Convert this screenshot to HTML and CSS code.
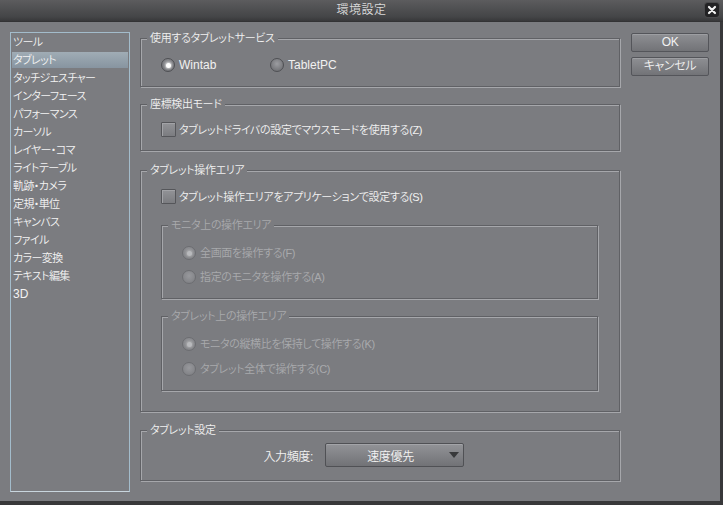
FILE: index.html
```html
<!DOCTYPE html>
<html lang="ja">
<head>
<meta charset="utf-8">
<title>環境設定</title>
<link rel="stylesheet" href="styles.css">
</head>
<body>
<div class="window">
  <div class="titlebar">
    <span class="title">環境設定</span>
    <span class="close"><svg width="14" height="14" viewBox="0 0 14 14"><path d="M4 4 L10 10 M10 4 L4 10" stroke="#f2f2f2" stroke-width="2.2" stroke-linecap="round"/></svg></span>
  </div>
  <div class="body">
    <ul class="sidebar">
      <li>ツール</li>
      <li class="sel">タブレット</li>
      <li>タッチジェスチャー</li>
      <li>インターフェース</li>
      <li>パフォーマンス</li>
      <li>カーソル</li>
      <li>レイヤー・コマ</li>
      <li>ライトテーブル</li>
      <li>軌跡・カメラ</li>
      <li>定規・単位</li>
      <li>キャンバス</li>
      <li>ファイル</li>
      <li>カラー変換</li>
      <li>テキスト編集</li>
      <li><span class="latin">3D</span></li>
    </ul>
    <div class="main">
      <fieldset class="group g1">
        <legend>使用するタブレットサービス</legend>
        <div class="gbody b1">
          <div class="row">
            <label class="opt wide"><span class="radio on"></span><span class="latin">Wintab</span></label>
            <label class="opt"><span class="radio"></span><span class="latin">TabletPC</span></label>
          </div>
        </div>
      </fieldset>
      <fieldset class="group g2">
        <legend>座標検出モード</legend>
        <div class="gbody b2">
          <label class="opt"><span class="check"></span><span>タブレットドライバの設定でマウスモードを使用する(Z)</span></label>
        </div>
      </fieldset>
      <fieldset class="group g3">
        <legend>タブレット操作エリア</legend>
        <div class="gbody b3">
          <label class="opt"><span class="check"></span><span>タブレット操作エリアをアプリケーションで設定する(S)</span></label>
          <fieldset class="group sub s1 disabled">
            <legend>モニタ上の操作エリア</legend>
            <div class="gbody bs s1b">
              <label class="opt"><span class="radio on"></span><span>全画面を操作する(F)</span></label>
              <label class="opt"><span class="radio"></span><span>指定のモニタを操作する(A)</span></label>
            </div>
          </fieldset>
          <fieldset class="group sub s2 disabled">
            <legend>タブレット上の操作エリア</legend>
            <div class="gbody bs s2b">
              <label class="opt"><span class="radio on"></span><span>モニタの縦横比を保持して操作する(K)</span></label>
              <label class="opt"><span class="radio"></span><span>タブレット全体で操作する(C)</span></label>
            </div>
          </fieldset>
        </div>
      </fieldset>
      <fieldset class="group g4">
        <legend>タブレット設定</legend>
        <div class="gbody b4">
          <span class="flabel">入力頻度:</span>
          <div class="select"><span class="stext">速度優先</span><span class="arrow"></span></div>
        </div>
      </fieldset>
    </div>
    <div class="buttons">
      <div class="btn">OK</div>
      <div class="btn">キャンセル</div>
    </div>
  </div>
</div>
</body>
</html>
```
FILE: styles.css
```css
* { box-sizing: border-box; }
html, body { margin: 0; padding: 0; }
body {
  font-family: "Liberation Sans", "Noto Sans CJK JP", sans-serif;
  font-size: 11px;
  font-weight: 350;
  letter-spacing: -0.35px;
  font-feature-settings: "palt";
  color: #f1f1f1;
  background: #3a3a3c;
}
.latin {
  font-size: 12px;
  letter-spacing: 0;
}
.window {
  width: 723px;
  height: 505px;
  display: flex;
  flex-direction: column;
  background: #7b7c80;
  overflow: hidden;
}
.titlebar {
  height: 22px;
  flex: none;
  display: grid;
  grid-template-columns: 1fr auto 1fr;
  align-items: center;
  background: linear-gradient(#5c5c5e, #444547 80%, #38383a);
  border-bottom: 1px solid #333335;
}
.title {
  grid-column: 2;
  color: #d9d9d9;
  font-size: 12px;
  line-height: 21px;
  letter-spacing: 0.5px;
}
.close {
  grid-column: 3;
  justify-self: end;
  align-self: start;
  margin: 3px 4px 0 0;
  width: 14px;
  height: 14px;
  border-radius: 3px;
  background: #222224;
  box-shadow: 0 0 0 1px #4a4a4c;
  display: block;
}
.close svg { display: block; }
.body {
  flex: 1;
  display: flex;
  align-items: flex-start;
  padding: 9px 0 0 10px;
  border-right: 3px solid #38383a;
  border-bottom: 4px solid #38383a;
}
.sidebar {
  list-style: none;
  margin: 1px 0 0 0;
  padding: 1px 0 0 0;
  width: 120px;
  height: 460px;
  border: 1px solid #a3bccb;
  border-bottom-color: #c9d6de;
  flex: none;
}
.sidebar li {
  height: 16px;
  line-height: 16px;
  margin: 0 1px 2px 1px;
  padding-left: 1px;
  white-space: nowrap;
  color: #f3f3f3;
  letter-spacing: -0.6px;
}
.sidebar li.sel {
  background: linear-gradient(#a0acb5, #8794a0);
}
.main {
  width: 480px;
  margin-left: 10px;
  flex: none;
  display: flex;
  flex-direction: column;
}
.group {
  margin: 0;
  padding: 0;
  min-width: 0;
  border: 1px solid #606165;
  box-shadow: inset 1px 1px 0 #a6a7ab, 1px 1px 0 #a6a7ab;
}
.group legend {
  margin-left: 6px;
  padding: 0 3px;
  line-height: 15px;
  height: 15px;
  background: #7b7c80;
  color: #f1f1f1;
  white-space: nowrap;
}
.g2 { margin-top: 10px; }
.g3 { margin-top: 12px; }
.g4 { margin-top: 11px; }
.gbody { padding-left: 20px; }
.b1 { padding-top: 12px; padding-bottom: 14px; }
.b2 { padding-top: 10px; padding-bottom: 13px; }
.b3 { padding-top: 11px; padding-bottom: 20px; padding-right: 21px; }
.b4 {
  padding-top: 5px;
  padding-bottom: 13px;
  display: flex;
  align-items: center;
}
.row { display: flex; }
.opt {
  display: flex;
  align-items: center;
  white-space: nowrap;
  line-height: 14px;
}
.opt.wide { width: 109px; }
.radio {
  width: 14px;
  height: 14px;
  flex: none;
  border-radius: 50%;
  border: 1px solid #4f5054;
  background: radial-gradient(circle at 50% 40%, #9c9da1, #737478 75%);
  margin-right: 4px;
  display: grid;
  place-items: center;
}
.radio.on::after {
  content: "";
  width: 5px;
  height: 5px;
  border-radius: 50%;
  background: #ffffff;
  box-shadow: 0 0 2px 1px rgba(255,255,255,0.55);
}
.check {
  width: 15px;
  height: 15px;
  flex: none;
  border: 1px solid #55565a;
  border-radius: 1px;
  background: linear-gradient(#929397, #7b7c80);
  box-shadow: inset 1px 1px 0 #a2a3a7;
  margin-right: 3px;
}
.sub { margin-top: 14px; }
.s2 { margin-top: 10px; }
.bs {
  display: flex;
  flex-direction: column;
  padding-top: 13px;
  padding-bottom: 14px;
}
.s1b { gap: 10px; }
.s2b { gap: 11px; }
.disabled legend, .disabled .opt { color: #a9aaad; }
.disabled .radio {
  border-color: #6c6d71;
  background: radial-gradient(circle at 50% 40%, #98999d, #828387 75%);
}
.disabled .radio.on::after {
  background: #b9babd;
  box-shadow: 0 0 2px 1px rgba(190,190,190,0.5);
}
.flabel {
  width: 152px;
  text-align: right;
  flex: none;
  font-size: 12px;
}
.select {
  margin-left: 12px;
  width: 139px;
  height: 24px;
  border: 1px solid #505155;
  border-radius: 2px;
  background: linear-gradient(#929397, #717276);
  box-shadow: inset 0 1px 0 #a3a4a8;
  display: flex;
  align-items: center;
}
.stext {
  flex: 1;
  text-align: center;
  padding-left: 6px;
  color: #f3f3f3;
  font-size: 12px;
}
.arrow {
  width: 0;
  height: 0;
  border-left: 5px solid transparent;
  border-right: 5px solid transparent;
  border-top: 6px solid #38393b;
  margin-right: 4px;
}
.buttons {
  margin-left: 11px;
  margin-top: 2px;
  width: 78px;
  flex: none;
  display: flex;
  flex-direction: column;
  gap: 5px;
}
.btn {
  height: 19px;
  line-height: 17px;
  text-align: center;
  border: 1px solid #54555a;
  border-radius: 2px;
  background: linear-gradient(#8e8f93, #727377);
  box-shadow: inset 0 1px 0 #9d9ea2;
  color: #f2f2f2;
  font-size: 12px;
}
```
